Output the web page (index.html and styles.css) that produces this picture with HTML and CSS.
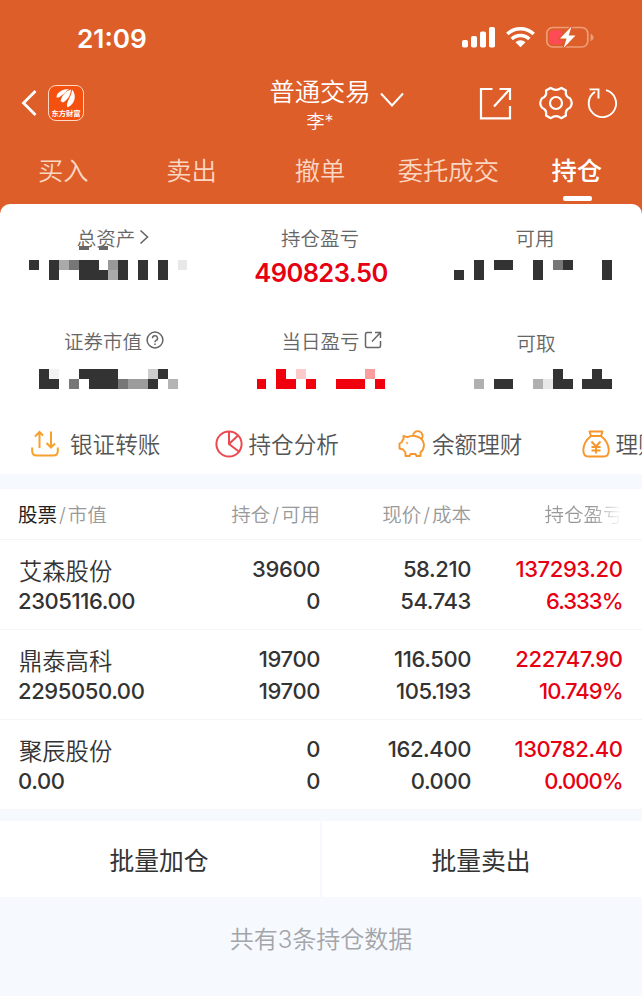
FILE: index.html
```html
<!DOCTYPE html>
<html lang="zh-CN">
<head>
  <meta charset="UTF-8" />
  <meta name="viewport" content="width=device-width, initial-scale=1.0" />
  <title>普通交易 - 持仓</title>
  <link rel="stylesheet" href="styles.css">
</head>
<body>
  <header class="header">
    <div class="status">
      <span class="time">21:09</span>
      <svg class="status-icons" width="132" height="24" viewBox="0 0 132 24">
        <g fill="#fff">
          <rect x="0" y="14" width="6" height="7.5" rx="1.8"/>
          <rect x="9" y="10" width="6" height="11.5" rx="1.8"/>
          <rect x="18" y="5.5" width="6" height="16" rx="1.8"/>
          <rect x="27" y="1" width="6" height="20.5" rx="1.8"/>
          <path d="M58.500 21.300l5-5.100a7.200 7.200 0 0 0-10 0z"/>
        </g>
        <g fill="none" stroke="#fff" stroke-width="3.500">
          <path d="M45.300 8.100a18.800 18.800 0 0 1 26.400 0"/>
          <path d="M49.700 13.100a12.500 12.500 0 0 1 17.600 0"/>
        </g>
        <rect x="84.800" y="1.500" width="41" height="19.500" rx="6" fill="none" stroke="#ef9d78" stroke-width="1.700"/>
        <path d="M128.500 8v7q3-1 3-3.500t-3-3.500z" fill="#ef9d78"/>
        <rect x="87.500" y="4.200" width="13" height="14" rx="3.500" fill="#ff4b55"/>
        <path d="M109.500 0.500L98 12.500h6.600l-3 9.500L113.500 9.500h-6.800z" fill="#fff" stroke="#dd5e29" stroke-width="2.400" paint-order="stroke"/>
      </svg>
    </div>

    <div class="navbar">
      <div class="nav-left">
        <svg width="16" height="28" viewBox="0 0 16 28" fill="none" stroke="#fff" stroke-width="2.800"><path d="M14.500 2L2.500 14l12 12"/></svg>
        <div class="logo">
          <svg width="22" height="20" viewBox="0 0 22 20" fill="#fff">
            <path d="M1.500 9.500C1.500 4 8 1 14 1 10.500 3.500 9 6.500 3.500 9.500z"/>
            <path d="M5.500 13C7.500 6 11 3 16 1.500 15.500 7 13.500 11 8 14.500z"/>
            <path d="M12.500 19.500C10 14.500 17 8.500 17 1.500c4.500 5 4 14-4.500 18z"/>
          </svg>
          <span>东方财富</span>
        </div>
      </div>
      <div class="nav-title">
        <div class="title">普通交易</div>
        <div class="account">李*</div>
      </div>
      <svg class="arrow-down" width="26" height="18" viewBox="0 0 26 18" fill="none" stroke="#fff" stroke-width="2"><path d="M2 2.500l11 12 11-12"/></svg>
      <div class="nav-right">
        <svg width="34" height="34" viewBox="0 0 34 34" fill="none" stroke="#fff" stroke-width="2.200">
          <path d="M14.500 3H3v29.300h29V20"/><path d="M21.500 3H32V14M31.500 3.500L16 20.500"/>
        </svg>
        <svg class="gear" width="34" height="34" viewBox="0 0 34 34" fill="none" stroke="#fff" stroke-width="2.200" stroke-linejoin="round">
          <path d="M11.800 1.800Q17 5.800 22.200 1.800L27 4.500Q25.800 10.300 31 12.300Q34.500 17 31 21.700Q25.800 23.700 27 29.500L22.200 32.200Q17 28.200 11.800 32.200L7 29.500Q8.200 23.700 3 21.700Q-.5 17 3 12.300Q8.200 10.300 7 4.500z"/>
          <circle cx="17" cy="17" r="6"/>
        </svg>
        <svg width="32" height="32" viewBox="0 0 32 32" fill="none" stroke="#fff" stroke-width="1.900">
          <path d="M19 3.200A13.700 13.700 0 1 1 8 4.900"/><path d="M2.500 2.400h9v9"/>
        </svg>
      </div>
    </div>

    <nav class="tabs">
      <a>买入</a>
      <a>卖出</a>
      <a>撤单</a>
      <a>委托成交</a>
      <a class="active">持仓</a>
    </nav>
  </header>

  <section class="card">
    <div class="summary">
      <div class="cell">
        <div class="label label-total">总资产<svg width="10" height="16" viewBox="0 0 10 16" fill="none" stroke="#666" stroke-width="1.600"><path d="M1.500 1.500L8.500 8l-7 6.500"/></svg></div>
        <!-- masked amounts are drawn as blocks -->
        <svg class="mask mask-total" width="214" height="34" viewBox="0 246 214 34" fill="#333">
          <path d="M79 246h10v4H79zM99 246h9v4h-9z" fill="#666"/>
          <path d="M29 260h10v10H29zM49 260h10v20H49zM79 260h20v10h9v10H79zM118 260h10v20h-10zM138 260h10v20h-10zM158 260h10v20h-10z"/>
          <path d="M59 260h10v10H59zM108 270h10v10h-10z" fill="#aaa"/>
          <path d="M69 260h10v10H69z" fill="#777"/>
          <path d="M108 260h10v10h-10z" fill="#999"/>
          <path d="M178 260h9v10h-9z" fill="#e8e8e8"/>
        </svg>
      </div>
      <div class="cell">
        <div class="label">持仓盈亏</div>
        <div class="profit">490823.50</div>
      </div>
      <div class="cell">
        <div class="label label-usable">可用</div>
        <svg class="mask" width="214" height="20" viewBox="428 260 214 20" fill="#333">
          <path d="M454 270h10v10h-10zM474 260h10v20h-10zM494 260h19v10h-19zM533 260h10v20h-10zM563 260h10v10h-10zM602 260h10v20h-10z"/>
          <path d="M553 260h10v10h-10z" fill="#777"/>
        </svg>
      </div>
      <div class="cell">
        <div class="label label-value">证券市值<svg width="18" height="18" viewBox="0 0 18 18" fill="none" stroke="#666" stroke-width="1.500"><circle cx="9" cy="9" r="7.900"/><path d="M6.500 7.200a2.500 2.500 0 1 1 3.700 2.200q-1.200.7-1.200 1.800M9 12.500v1.600"/></svg></div>
        <svg class="mask" width="214" height="20" viewBox="0 369 214 20" fill="#333">
          <path d="M39 369h10v10h10v10H39zM79 369h39v20H89v-10H79zM158 369h10v10h-10v10h-10v-10h10z"/>
          <path d="M49 369h10v10H49z" fill="#f3f3f3"/>
          <path d="M69 379h10v10H69zM118 379h10v10h-10z" fill="#777"/>
          <path d="M128 379h20v10h-20z" fill="#9c9c9c"/>
          <path d="M148 369h10v10h-10z" fill="#ccc"/>
          <path d="M168 379h10v10h-10z" fill="#b4b4b4"/>
        </svg>
      </div>
      <div class="cell">
        <div class="label label-today">当日盈亏<svg width="18" height="18" viewBox="0 0 18 18" fill="none" stroke="#666" stroke-width="1.500"><path d="M8 1.500H3Q1.500 1.500 1.500 3v12q0 1.500 1.500 1.500h12q1.500 0 1.500-1.500v-5"/><path d="M11 1.500h5.500V7M16 2L8 10.500"/></svg></div>
        <svg class="mask" width="214" height="20" viewBox="214 369 214 20" fill="#f0000c">
          <path d="M257 379h9v10h-9zM276 369h10v10h10v10h-20zM306 379h10v10h-10zM336 379h29v10h-29zM375 379h10v10h-10z"/>
          <path d="M296 369h10v10h-10z" fill="#fccaca"/>
          <path d="M365 369h10v10h-10z" fill="#f99d9d"/>
        </svg>
      </div>
      <div class="cell">
        <div class="label label-cash">可取</div>
        <svg class="mask" width="214" height="20" viewBox="428 369 214 20" fill="#333">
          <path d="M494 379h19v10h-19zM553 369h10v10h10v10h-20zM592 369h10v10h10v10h-30v-10h10z"/>
          <path d="M474 379h10v10h-10zM533 379h10v10h-10z" fill="#b0b0b0"/>
          <path d="M543 379h10v10h-10z" fill="#e8e8e8"/>
        </svg>
      </div>
    </div>

    <div class="actions">
      <div class="action">
        <svg width="28" height="28" viewBox="0 0 28 28" fill="none" stroke="#f7a02b" stroke-width="2">
          <path d="M1.200 17.500v3.500q0 4.500 4.500 4.500h16.600q4.500 0 4.500-4.500v-3.500"/>
          <path d="M8.500 18V2.500M4 6.500l4.500-4.500L12 5.500M20 1.500v16M15.500 13l4.500 4.500 4-4"/>
        </svg>
        <span>银证转账</span>
      </div>
      <div class="action">
        <svg width="28" height="28" viewBox="0 0 28 28" fill="none" stroke="#ea4a4f" stroke-width="2">
          <circle cx="14" cy="14" r="12.600"/><path d="M14 1.500V14l10.500 8M14 14l9-8.500"/>
        </svg>
        <span>持仓分析</span>
      </div>
      <div class="action">
        <svg width="28" height="28" viewBox="0 0 28 28" fill="none" stroke="#f7962b" stroke-width="1.900" stroke-linejoin="round">
          <path d="M5.500 6l4 1.200Q13 5.500 17 6q8.500 1.500 9 9-.3 5-3.500 7.500V26h-4l-1-2h-5l-1 2h-4v-3.500L5 19.500l-3.500-1v-5L4 12q.3-1.800 1.500-3z"/>
          <path d="M15 6a4.800 4.800 0 1 1 8.500 3"/><circle cx="9" cy="13" r=".3"/>
        </svg>
        <span>余额理财</span>
      </div>
      <div class="action">
        <svg width="28" height="28" viewBox="0 0 28 28" fill="none" stroke="#f7962b" stroke-width="1.900" stroke-linejoin="round">
          <path d="M9 6L7.500 1.500h13L19 6zM9 6Q1.500 12 1.300 20q0 6.500 5 6.500h15.500q5 0 5-6.500Q26.500 12 19 6"/>
          <path d="M9.500 11.500L14 16.500l4.500-5M14 16.500V23.500M9.500 17h9M9.500 20.500h9"/>
        </svg>
        <span>理财</span>
      </div>
    </div>
  </section>

  <section class="holdings">
    <div class="row head">
      <div><b>股票</b><i>/</i>市值</div>
      <div>持仓<i>/</i>可用</div>
      <div>现价<i>/</i>成本</div>
      <div class="fade">持仓盈亏</div>
    </div>
    <div class="row">
      <div><p class="name">艾森股份</p><p>2305116.00</p></div>
      <div><p>39600</p><p>0</p></div>
      <div><p>58.210</p><p>54.743</p></div>
      <div class="red"><p>137293.20</p><p class="rate">6.333%</p></div>
    </div>
    <div class="row">
      <div><p class="name">鼎泰高科</p><p>2295050.00</p></div>
      <div><p>19700</p><p>19700</p></div>
      <div><p>116.500</p><p>105.193</p></div>
      <div class="red"><p>222747.90</p><p class="rate">10.749%</p></div>
    </div>
    <div class="row">
      <div><p class="name">聚辰股份</p><p>0.00</p></div>
      <div><p>0</p><p>0</p></div>
      <div><p>162.400</p><p>0.000</p></div>
      <div class="red"><p>130782.40</p><p class="rate">0.000%</p></div>
    </div>
  </section>

  <div class="batch">
    <button>批量加仓</button>
    <button>批量卖出</button>
  </div>
  <p class="total">共有3条持仓数据</p>
</body>
</html>
```

FILE: styles.css
```css
* { box-sizing: border-box; }
body {
  margin: 0;
  width: 642px;
  height: 996px;
  overflow: hidden;
  background: linear-gradient(#dd5e29 230px, #f6f9fe 230px);
  color: #333;
  font-family: Inter, 'Noto Sans CJK SC', sans-serif;
}
p { margin: 0; }
svg { display: block; flex: none; }
.header {
  height: 204px;
  color: #fff;
}
.status {
  display: flex;
  height: 76px;
  padding: 26px 48px 0 77px;
  justify-content: space-between;
}
.time {
  font-size: 26.200px;
  font-weight: 600;
  line-height: 26px;
}
.navbar {
  display: grid;
  grid-template-columns: 248px 144px 34px 1fr;
  height: 62px;
}
.nav-left {
  display: flex;
  align-items: center;
  gap: 11px;
  padding: 0 0 8px 21px;
}
.logo {
  width: 36px;
  height: 36px;
  padding-top: 2px;
  border: 1.5px solid #ffd9c4;
  border-radius: 8px;
  background: #f4500f;
  display: flex;
  flex-direction: column;
  align-items: center;
}
.logo span {
  font: 700 7.3px/10px 'Noto Sans CJK SC', sans-serif;
  white-space: nowrap;
}
.nav-title { text-align: center; font-weight: 350; }
.title {
  font-size: 25.300px;
  line-height: 31px;
}
.account {
  font-size: 18px;
  line-height: 30px;
}
.arrow-down { margin: 15px 0 0 -13px; }
.nav-right {
  display: flex;
  align-items: center;
  padding: 0 0 8px 52px;
}
.gear { margin: 0 14px 0 27px; }
.tabs {
  display: flex;
  height: 66px;
  margin-left: -1px;
}
.tabs a {
  width: 128.4px;
  padding-top: 15px;
  text-align: center;
  font-size: 25.300px;
  line-height: 36px;
  font-weight: 350;
  color: #fbd6c2;
}
.tabs .active {
  color: #fff;
  font-weight: 500;
}
.tabs .active::after {
  content: '';
  display: block;
  width: 29px;
  height: 5px;
  margin: 7px auto 0;
  border-radius: 2px;
  background: #fff;
  transform: translateX(1px);
}
.card {
  height: 270px;
  background: #fff;
  border-radius: 10px 10px 0 0;
}
.summary {
  display: grid;
  grid-template-columns: repeat(3, 214px);
  grid-template-rows: 103px 103px;
  height: 206px;
}
.label {
  display: flex;
  height: 56px;
  padding: 10px 2px 0 0;
  align-items: center;
  justify-content: center;
  gap: 4px;
  font-size: 19.5px;
  font-weight: 350;
  color: #666;
}
.label-total { padding-left: 14px; }
.label-usable { padding-right: 0; }
.label-value { padding-left: 16px; }
.label-today { padding-left: 23px; }
.label-cash { padding: 14px 0 0 2px; }
.mask { shape-rendering: crispEdges; }
.mask-total { margin-top: -14px; }
.summary .cell:nth-child(n+4) .mask { margin-top: 6px; }
.profit {
  text-align: center;
  font-size: 25.500px;
  line-height: 26px;
  font-weight: 600;
  letter-spacing: -0.6px;
  color: #e60012;
}
.actions {
  display: flex;
  width: 642px;
  height: 64px;
  padding-left: 31px;
  overflow: hidden;
}
.action {
  display: flex;
  flex: none;
  width: 183.5px;
  height: 66px;
  align-items: center;
  gap: 6px;
  white-space: nowrap;
  font-size: 22.600px;
  font-weight: 350;
  color: #555;
}
.action svg { margin-top: 2px; }
.action:first-child { gap: 11px; }
.holdings {
  margin-top: 15px;
  background: #fff;
}
.row {
  display: grid;
  grid-template-columns: 200px 102px 151px 151.500px;
  height: 90px;
  padding: 14px 0 0 18px;
  border-bottom: 1px solid #f5f5f7;
  text-align: right;
  font-size: 22px;
  font-weight: 500;
  line-height: 31.500px;
  letter-spacing: -0.4px;
}
.row > div:first-child { text-align: left; }
.row .name {
  font-size: 23.300px;
  font-weight: 350;
  letter-spacing: 0;
  padding: 2px 0 0 1px;
  height: 31.500px;
}
.rate { letter-spacing: -1px; }
.head {
  height: 51px;
  padding-top: 11px;
  font-size: 19.500px;
  font-weight: 350;
  letter-spacing: 0;
  color: #999;
}
.head b {
  font-weight: 400;
  color: #222;
}
.head i {
  font-style: normal;
  padding: 0 2px;
}
.head .fade {
  background: linear-gradient(90deg, #999 80%, transparent 99%);
  background-clip: text;
  -webkit-background-clip: text;
  color: transparent;
}
.red { color: #e60012; }
.batch {
  display: grid;
  grid-template-columns: 1fr 1fr;
  gap: 2px;
  margin-top: 11px;
}
.batch button {
  height: 76px;
  border: 0;
  padding: 0 2px 0 0;
  background: #fff;
  font: 400 24.800px 'Noto Sans CJK SC', sans-serif;
  color: #333;
}
.total {
  padding-top: 25px;
  text-align: center;
  font-size: 24px;
  line-height: 36px;
  font-weight: 350;
  color: #a3a5a9;
}
```
